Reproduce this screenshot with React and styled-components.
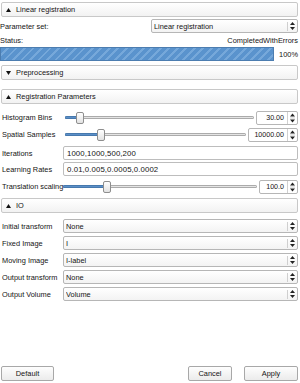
import React from 'react';
import styled, { createGlobalStyle } from 'styled-components';

const Global = createGlobalStyle`
  html, body { margin: 0; padding: 0; background: #ffffff; }
  body {
    font-family: "Liberation Sans", Arial, sans-serif;
    font-size: 7.4px;
    color: #141414;
  }
`;

const Page = styled.div`
  width: 300px;
  height: 383px;
  box-sizing: border-box;
  padding: 2px 2px 2px 0;
  display: flex;
  flex-direction: column;
`;

const Header = styled.div`
  height: 15px;
  box-sizing: border-box;
  margin-top: ${p => p.$mt || 0}px;
  margin-left: 1px;
  border: 1px solid #c8c8c8;
  border-radius: 2px;
  background: linear-gradient(#ffffff, #f2f2f2);
  display: flex;
  align-items: center;
  gap: 5px;
  padding-left: 4px;
`;

const Row = styled.div`
  display: grid;
  grid-template-columns: ${p => p.$cols || '63px 1fr'};
  align-items: center;
  margin-top: ${p => p.$mt || 0}px;
  height: ${p => p.$h || 14}px;
`;

const Label = styled.span`
  padding-left: ${p => p.$pl ?? 2}px;
  white-space: nowrap;
`;

const StatusRow = styled.div`
  display: flex;
  justify-content: space-between;
  align-items: center;
  height: 10px;
  margin-top: 2px;
`;

const ProgressRow = styled.div`
  display: flex;
  align-items: center;
  gap: 3px;
  margin-top: 2px;
  height: 14px;
`;

const Bar = styled.div`
  flex: 1;
  height: 14px;
  box-sizing: border-box;
  border: 1px solid #4c7db0;
  background: repeating-linear-gradient(
    135deg,
    #5a93cd 0px,
    #5a93cd 4px,
    #76a8da 4px,
    #76a8da 6px
  );
`;

const Percent = styled.span`
  width: 21px;
  text-align: right;
`;

const Combo = styled.div`
  height: 14px;
  box-sizing: border-box;
  border: 1px solid #b6b6b6;
  border-radius: 2px;
  background: linear-gradient(#ffffff, #f3f3f3);
  display: flex;
  align-items: center;
  padding-left: 2px;
`;

const Grow = styled.span`
  flex: 1;
  white-space: nowrap;
  overflow: hidden;
`;

const ComboButton = styled.span`
  width: 9px;
  height: 9px;
  border-left: 1px solid #cfcfcf;
  display: flex;
  align-items: center;
  justify-content: center;
`;

const LineEdit = styled.div`
  height: 14px;
  box-sizing: border-box;
  border: 1px solid #bdbdbd;
  border-radius: 2px;
  background: #ffffff;
  display: flex;
  align-items: center;
  padding-left: 3px;
  font-size: 7.8px;
  letter-spacing: 0.1px;
`;

const SliderField = styled.div`
  display: flex;
  align-items: center;
  gap: 2px;
  margin-left: ${p => p.$ml || 0}px;
`;

const Slider = styled.div`
  flex: 1;
  display: flex;
  align-items: center;
  height: 14px;
`;

const Filled = styled.div`
  height: 3px;
  box-sizing: border-box;
  background: #5b8fc8;
  border: 1px solid #4779ad;
  border-right: none;
  border-radius: 2px 0 0 2px;
`;

const Rest = styled.div`
  flex: 1;
  height: 3px;
  box-sizing: border-box;
  background: #e4e4e4;
  border: 1px solid #ababab;
  border-left: none;
  border-radius: 0 2px 2px 0;
`;

const Handle = styled.div`
  width: 8px;
  height: 12px;
  box-sizing: border-box;
  border: 1px solid #8e8e8e;
  border-radius: 2px;
  background: linear-gradient(#ffffff, #e2e2e2);
`;

const Spin = styled.div`
  width: ${p => p.$w}px;
  height: 14px;
  box-sizing: border-box;
  border: 1px solid #b6b6b6;
  border-radius: 2px;
  background: #ffffff;
  display: flex;
  align-items: center;
  font-size: 7.1px;
`;

const SpinText = styled.span`
  flex: 1;
  text-align: right;
  padding-right: 3px;
`;

const SpinButtons = styled.span`
  width: 9px;
  height: 12px;
  border-left: 1px solid #d0d0d0;
  display: flex;
  align-items: center;
  justify-content: center;
`;

const Spacer = styled.div`
  flex: 1;
`;

const ButtonBar = styled.div`
  display: flex;
  align-items: center;
  height: 15px;
  padding-left: 1px;
`;

const Button = styled.div`
  width: ${p => p.$w}px;
  margin-left: ${p => p.$ml || 0}px;
  height: 15px;
  box-sizing: border-box;
  border: 1px solid #a8a8a8;
  border-radius: 2px;
  background: linear-gradient(#fefefe, #ebebeb);
  display: flex;
  align-items: center;
  justify-content: center;
`;

const Arrow = ({ down }) => (
  <svg width="5" height="4" viewBox="0 0 5 4">
    {down ? <polygon points="0,0 5,0 2.5,4" fill="#111" /> : <polygon points="0,4 5,4 2.5,0" fill="#111" />}
  </svg>
);

const UpDown = () => (
  <svg width="5" height="8" viewBox="0 0 5 8">
    <polygon points="0,3 5,3 2.5,0" fill="#222" />
    <polygon points="0,5 5,5 2.5,8" fill="#222" />
  </svg>
);

const SpinArrows = () => (
  <svg width="5" height="10" viewBox="0 0 5 10">
    <polygon points="0,3.5 5,3.5 2.5,0.5" fill="#222" />
    <line x1="0" y1="5" x2="5" y2="5" stroke="#cfcfcf" strokeWidth="1" />
    <polygon points="0,6.5 5,6.5 2.5,9.5" fill="#222" />
  </svg>
);

const ComboBox = ({ value }) => (
  <Combo>
    <Grow>{value}</Grow>
    <ComboButton><UpDown /></ComboButton>
  </Combo>
);

const SpinBox = ({ value, w }) => (
  <Spin $w={w}>
    <SpinText>{value}</SpinText>
    <SpinButtons><SpinArrows /></SpinButtons>
  </Spin>
);

const SliderSpin = ({ filled, value, w, ml }) => (
  <SliderField $ml={ml}>
    <Slider>
      <Filled style={{ width: filled }} />
      <Handle />
      <Rest />
    </Slider>
    <SpinBox value={value} w={w} />
  </SliderField>
);

export default function App() {
  return (
    <>
      <Global />
      <Page>
        <Header><Arrow /><span>Linear registration</span></Header>
        <Row $cols="151px 1fr" $mt={2}>
          <Label $pl={0}>Parameter set:</Label>
          <ComboBox value="Linear registration" />
        </Row>
        <StatusRow>
          <span>Status:</span>
          <span>CompletedWithErrors</span>
        </StatusRow>
        <ProgressRow>
          <Bar />
          <Percent>100%</Percent>
        </ProgressRow>
        <Header $mt={4}><Arrow down /><span>Preprocessing</span></Header>

        <Header $mt={9}><Arrow /><span>Registration Parameters</span></Header>
        <Row $mt={6} $h={15}>
          <Label>Histogram Bins</Label>
          <SliderSpin filled={11} value="30.00" w={42} ml={2} />
        </Row>
        <Row $mt={2} $h={15}>
          <Label>Spatial Samples</Label>
          <SliderSpin filled={32} value="10000.00" w={50} ml={2} />
        </Row>
        <Row $mt={4}>
          <Label>Iterations</Label>
          <LineEdit>1000,1000,500,200</LineEdit>
        </Row>
        <Row $mt={2}>
          <Label>Learning Rates</Label>
          <LineEdit>0.01,0.005,0.0005,0.0002</LineEdit>
        </Row>
        <Row $mt={3} $h={15}>
          <Label>Translation scaling</Label>
          <SliderSpin filled={40} value="100.0" w={39} ml={0} />
        </Row>

        <Header $mt={4}><Arrow /><span>IO</span></Header>
        <Row $mt={6}>
          <Label>Initial transform</Label>
          <ComboBox value="None" />
        </Row>
        <Row $mt={3}>
          <Label>Fixed Image</Label>
          <ComboBox value="I" />
        </Row>
        <Row $mt={3}>
          <Label>Moving Image</Label>
          <ComboBox value="I-label" />
        </Row>
        <Row $mt={3}>
          <Label>Output transform</Label>
          <ComboBox value="None" />
        </Row>
        <Row $mt={3}>
          <Label>Output Volume</Label>
          <ComboBox value="Volume" />
        </Row>

        <Spacer />
        <ButtonBar>
          <Button $w={53}>Default</Button>
          <Spacer />
          <Button $w={44}>Cancel</Button>
          <Button $w={54} $ml={12}>Apply</Button>
        </ButtonBar>
      </Page>
    </>
  );
}
